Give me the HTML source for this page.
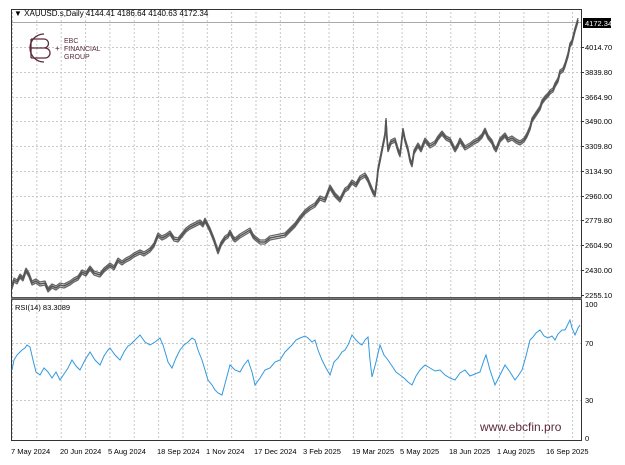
<!DOCTYPE html>
<html><head><meta charset="utf-8"><style>
html,body{margin:0;padding:0;background:#fff;width:625px;height:465px;overflow:hidden;font-family:"Liberation Sans",sans-serif}
svg text{font-family:"Liberation Sans",sans-serif}
</style></head><body>
<svg width="625" height="465" viewBox="0 0 625 465" xmlns="http://www.w3.org/2000/svg">
<defs>
<pattern id="vg" x="12" y="0" width="24.35" height="465" patternUnits="userSpaceOnUse">
<line x1="0.5" y1="0" x2="0.5" y2="465" stroke="#c8c8c8" stroke-dasharray="2,2"/>
</pattern>
<polyline id="pr" fill="none" stroke-linejoin="bevel" points="12,287 14,280 17,282 20,276 23,279 26,270 29,275 32,283 36,281 40,284 45,283 48,290 52,286 56,288 60,285 64,286 70,283 74,280 78,278 82,272 86,274 90,268 94,273 100,275 104,270 110,265 114,268 118,260 122,263 126,260 130,258 134,255 140,252 144,254 150,250 154,245 158,235 162,238 166,236 170,233 174,239 178,240 182,235 186,230 190,227 194,225 200,222 203,225 205,220 208,226 210,230 214,240 218,252 221,244 225,238 228,236 230,232 233,238 235,240 240,236 245,233 250,230 253,236 255,238 260,242 265,242 270,238 275,237 280,236 285,235 290,230 295,225 300,218 305,212 310,208 315,205 320,198 325,200 330,187 335,195 340,200 345,190 348,188 352,182 356,185 360,178 365,175 368,180 370,185 373,192 375,195 377,180 378,170 380,160 383,145 385,135 386,120 387,138 388,150 391,142 395,140 398,150 400,155 402,138 403,130 405,140 408,150 410,160 412,165 414,152 418,145 421,150 425,140 430,146 435,143 438,138 442,133 446,138 450,140 453,146 455,150 458,145 460,140 465,148 470,145 474,142 478,140 482,136 485,130 488,137 492,142 494,147 496,150 500,140 505,135 508,140 512,138 516,141 520,143 524,140 527,135 530,128 532,120 536,114 540,108 542,102 545,98 548,95 550,92 553,90 555,85 558,80 560,72 563,70 565,65 568,55 570,45 572,42 573,38 575,30 578,20"/>
</defs>
<rect x="12" y="10" width="569" height="287" fill="url(#vg)"/>
<rect x="12" y="300" width="569" height="140" fill="url(#vg)"/>
<g stroke="#c8c8c8" stroke-dasharray="2,2">
<line x1="12" y1="22.5" x2="581" y2="22.5" stroke="#aaa" stroke-dasharray="none"/>
<line x1="12" y1="47.5" x2="581" y2="47.5"/>
<line x1="12" y1="72.5" x2="581" y2="72.5"/>
<line x1="12" y1="97.5" x2="581" y2="97.5"/>
<line x1="12" y1="121.5" x2="581" y2="121.5"/>
<line x1="12" y1="146.5" x2="581" y2="146.5"/>
<line x1="12" y1="171.5" x2="581" y2="171.5"/>
<line x1="12" y1="196.5" x2="581" y2="196.5"/>
<line x1="12" y1="220.5" x2="581" y2="220.5"/>
<line x1="12" y1="245.5" x2="581" y2="245.5"/>
<line x1="12" y1="270.5" x2="581" y2="270.5"/>
<line x1="12" y1="343.5" x2="581" y2="343.5"/>
<line x1="12" y1="400.5" x2="581" y2="400.5"/>
</g>
<rect x="11.5" y="9.5" width="570" height="288" fill="none" stroke="#333"/>
<rect x="11.5" y="299.5" width="570" height="141" fill="none" stroke="#333"/>
<line x1="11" y1="298.5" x2="582" y2="298.5" stroke="#777" stroke-width="2"/>
<text x="14" y="16" font-size="8" fill="#000">▼ XAUUSD.s,Daily  4144.41 4186.64 4140.63 4172.34</text>
<g fill="none" stroke="#5a2a3a" stroke-width="1.3">
<path d="M44 34 A14 14 0 1 0 44 62"/>
<path d="M35 39 h9 a4.5 4.5 0 0 1 0 9 h-9 M35 48 h10 a5 5 0 0 1 0 10 h-10"/>
<path d="M31 39 v19 M31 39 h4 M31 48 h4 M31 58 h4"/>
</g>
<text x="55" y="51" font-size="8" fill="#5a2a3a">+</text>
<text x="64" y="43" font-size="7" fill="#5a2a3a">EBC</text>
<text x="64" y="51" font-size="7" fill="#5a2a3a">FINANCIAL</text>
<text x="64" y="59" font-size="7" fill="#5a2a3a">GROUP</text>
<use href="#pr" stroke="#666" stroke-width="1.3" transform="translate(0,-2)"/>
<use href="#pr" stroke="#666" stroke-width="1.3" transform="translate(0,2)"/>
<use href="#pr" stroke="#555" stroke-width="1.6"/>
<polyline fill="none" stroke="#3399dd" stroke-width="1" points="12,370 14,360 17,355 20,352 22,350 25,348 27,345 30,347 33,360 36,372 40,375 44,368 48,372 52,378 56,372 60,380 64,374 68,368 72,360 76,366 80,370 85,360 90,352 95,360 100,365 104,356 108,350 110,348 115,355 120,360 124,352 128,346 130,345 135,340 140,335 145,342 150,345 155,342 160,338 163,345 166,355 168,362 172,368 176,358 180,350 184,345 188,342 192,338 195,340 198,350 202,360 205,370 208,380 212,385 215,390 218,393 222,395 226,380 230,365 235,370 240,372 244,365 248,360 252,372 255,385 260,378 265,370 270,368 275,362 280,360 285,352 292,345 296,340 300,338 305,336 308,338 312,342 315,340 318,350 322,360 326,368 330,375 334,362 338,358 342,352 345,350 348,345 352,335 356,340 360,344 362,345 365,340 368,337 370,360 372,377 376,362 380,345 384,355 388,360 392,366 396,372 400,375 404,378 408,382 412,385 416,376 420,370 425,365 430,368 435,371 440,370 445,375 450,378 455,380 460,373 465,370 470,376 475,374 480,372 484,360 486,355 490,370 495,385 500,375 505,365 510,372 515,380 518,376 522,370 526,356 530,340 533,337 536,333 540,330 544,336 548,338 552,336 555,340 558,334 562,330 565,330 568,324 570,320 572,328 575,335 578,328 580,325"/>
<rect x="583" y="18" width="28" height="10" fill="#000"/>
<g font-size="7.5" fill="#000">
<text x="585" y="26" fill="#fff">4172.34</text>
<text x="585" y="50">4014.70</text>
<text x="585" y="75">3839.80</text>
<text x="585" y="100">3664.90</text>
<text x="585" y="124">3490.00</text>
<text x="585" y="149">3309.80</text>
<text x="585" y="174">3134.90</text>
<text x="585" y="199">2960.00</text>
<text x="585" y="223">2779.80</text>
<text x="585" y="248">2604.90</text>
<text x="585" y="273">2430.00</text>
<text x="585" y="298">2255.10</text>
<text x="585" y="307">100</text>
<text x="585" y="346">70</text>
<text x="585" y="403">30</text>
<text x="585" y="441">0</text>
</g>
<g stroke="#333"><line x1="581" y1="47.5" x2="584" y2="47.5"/><line x1="581" y1="72.5" x2="584" y2="72.5"/><line x1="581" y1="97.5" x2="584" y2="97.5"/><line x1="581" y1="121.5" x2="584" y2="121.5"/><line x1="581" y1="146.5" x2="584" y2="146.5"/><line x1="581" y1="171.5" x2="584" y2="171.5"/><line x1="581" y1="196.5" x2="584" y2="196.5"/><line x1="581" y1="220.5" x2="584" y2="220.5"/><line x1="581" y1="245.5" x2="584" y2="245.5"/><line x1="581" y1="270.5" x2="584" y2="270.5"/><line x1="581" y1="295.5" x2="584" y2="295.5"/></g>
<text x="15" y="310" font-size="7.5" fill="#000">RSI(14) 83.3089</text>
<text x="480" y="431" font-size="12" fill="#5a2a3a">www.ebcfin.pro</text>
<g font-size="7.5" fill="#000">
<text x="11" y="454">7 May 2024</text>
<text x="60" y="454">20 Jun 2024</text>
<text x="108" y="454">5 Aug 2024</text>
<text x="157" y="454">18 Sep 2024</text>
<text x="206" y="454">1 Nov 2024</text>
<text x="254" y="454">17 Dec 2024</text>
<text x="303" y="454">3 Feb 2025</text>
<text x="352" y="454">19 Mar 2025</text>
<text x="400" y="454">5 May 2025</text>
<text x="449" y="454">18 Jun 2025</text>
<text x="497" y="454">1 Aug 2025</text>
<text x="546" y="454">16 Sep 2025</text>
</g>
</svg>
</body></html>
